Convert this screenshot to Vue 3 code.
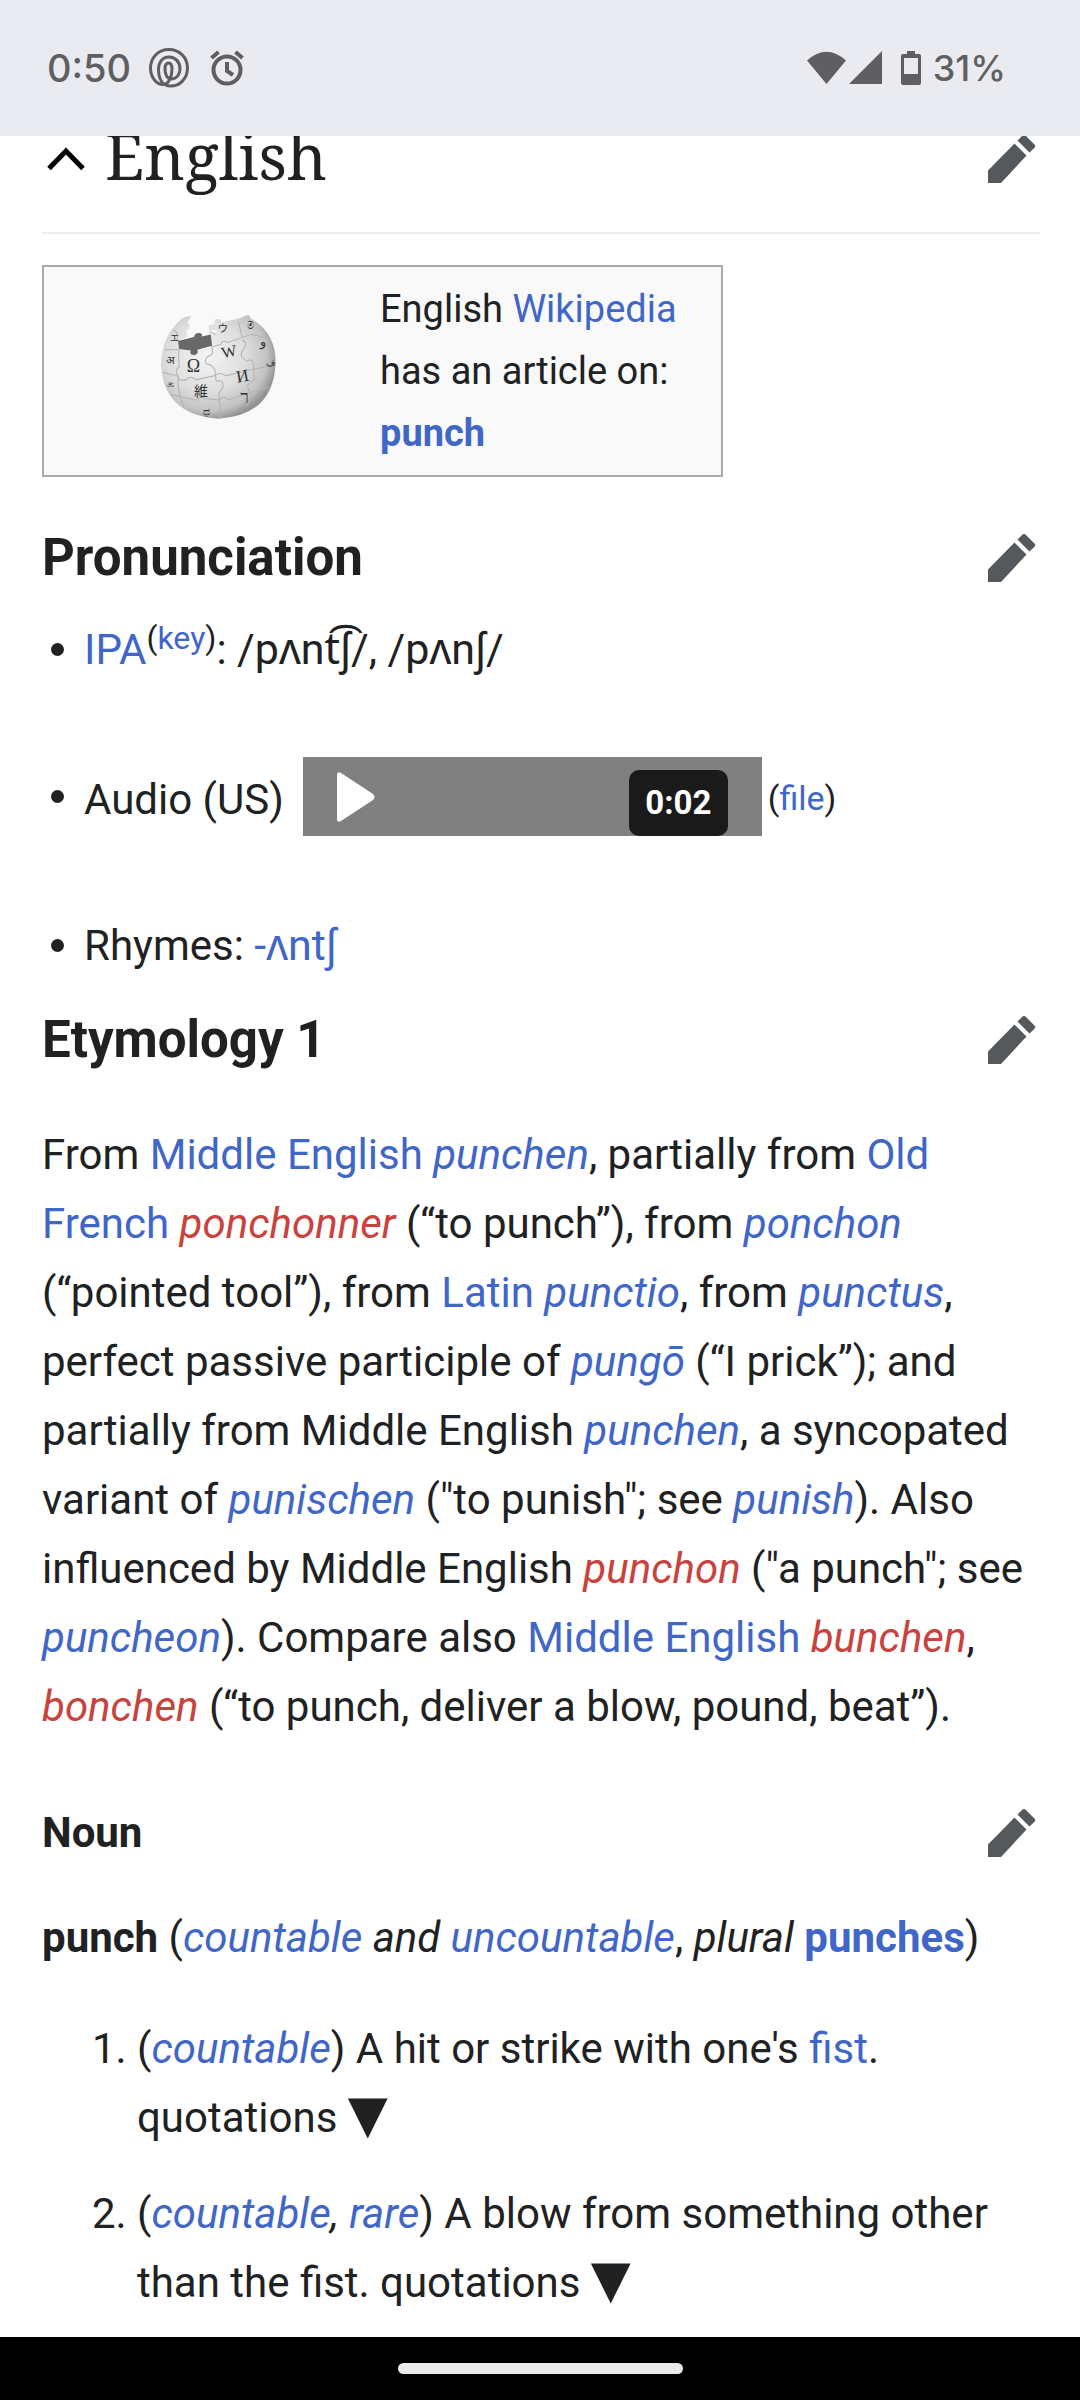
<script setup>
import { h, ref } from 'vue'

const expanded = ref(true)

const EditButton = (props) =>
  h('button', { class: 'edit', type: 'button', 'aria-label': `Edit ${props.section}` }, [
    h('svg', { viewBox: '0 0 48 48', width: 48, height: 48, 'aria-hidden': 'true' }, [
      h('path', { d: 'M0 48V35.500L26.500 8.500L38.500 20.500L13 48ZM29.500 5.500L34 1Q36 -1 38 1L46.500 9.500Q48 11 46.500 12.800L41.500 17.500Z' })
    ])
  ])
EditButton.props = ['section']
</script>

<template>
  <div class="screen">
    <header class="status">
      <div class="status-group left">
        <time>0:50</time>
        <svg class="spiral" viewBox="0 0 40 40" width="40" height="40" aria-hidden="true">
          <path d="M20 38C31 39 38.500 30 38.500 20C38.500 9 30 1.500 20 1.500C9 1.500 1.500 10 1.500 20C1.500 30 8 37 15 36.500C20 36 23 28 23 21C23 17 21.500 15 19.500 15C17 15 16 18 16 21C16 26 18 31 22 31C28 31 31 26 31 21C31 14 26.500 9 20 9C13 9 9.500 15 9.500 21C9.500 30 13 37 20 38" />
        </svg>
        <svg class="alarm" viewBox="0 0 34 36" width="34" height="36" aria-hidden="true">
          <circle cx="17" cy="20" r="13.500" />
          <path d="M17 12V21L23 25M1.500 8L8.500 2M32.500 8L25.500 2" />
        </svg>
      </div>
      <div class="status-group">
        <svg class="solid" viewBox="0 0 76 34" width="76" height="34" aria-hidden="true">
          <path d="M0 9.500Q19.500 -8 39 9.500L19.500 33ZM42 33L75 0V33Z" />
        </svg>
        <svg class="solid battery" viewBox="0 0 20 34" width="20" height="34" aria-hidden="true">
          <path fill-rule="evenodd" d="M6 0H14V3H18Q20 3 20 5V32Q20 34 18 34H2Q0 34 0 32V5Q0 3 2 3H6ZM3 7V23H17V7Z" />
        </svg>
        <span class="percent">31%</span>
      </div>
    </header>

    <main>
      <div class="title-row">
        <button class="collapse" type="button" aria-label="Toggle section" :aria-expanded="expanded" @click="expanded = !expanded">
          <svg viewBox="0 0 38 24" width="38" height="24" aria-hidden="true"><path d="M2 21.500L19 4L36 21.500" /></svg>
        </button>
        <h2>English</h2>
        <EditButton section="English" />
      </div>

      <template v-if="expanded">
        <aside class="sister">
          <div class="globe">
            <svg viewBox="55 40 350 347" width="117" height="116" role="img" aria-label="Wikipedia globe">
              <defs>
                <radialGradient id="ball" cx="0.400" cy="0.400" r="0.620">
                  <stop offset="0" stop-color="#f4f4f4" />
                  <stop offset="0.550" stop-color="#dedede" />
                  <stop offset="0.850" stop-color="#c2c2c2" />
                  <stop offset="1" stop-color="#929292" />
                </radialGradient>
              </defs>
              <path fill="url(#ball)" d="M118 62Q132 48 152 50L140 68Q150 76 146 86L136 94L140 110L112 124L115 148L148 152Q142 164 158 166Q174 166 170 152L212 142V104L228 96L224 90L206 96L202 78L222 72Q220 58 232 58Q244 58 241 68L290 58L314 48Q330 44 328 56Q404 96 404 190Q396 348 232 356Q68 344 61 194Q64 110 118 62Z" />
              <path fill="#686868" d="M112 124L160 112Q162 98 176 100Q188 102 182 110L210 104L214 138L170 150Q174 164 160 166Q144 164 150 152L115 148Z" />
              <g fill="none" stroke="#b2b2b2" stroke-width="3">
                <path d="M98 90Q116 100 108 124M72 150H115M66 218L110 228Q114 246 136 240Q150 224 166 240L220 228Q242 214 254 228L330 210L396 196" />
                <path d="M115 150Q112 180 116 200Q100 210 112 228Q110 280 130 320M212 142Q222 162 206 168Q188 176 196 192Q214 196 222 208L226 244Q250 238 246 262L234 282L240 354" />
                <path d="M212 142L240 134Q244 118 260 128L330 104L386 116M304 120Q324 128 304 154Q294 172 318 184Q336 172 338 200L340 240Q310 252 326 274Q336 290 318 320" />
                <path d="M88 282Q160 300 172 300Q176 284 190 296L234 300Q248 284 264 300L330 276L384 262M292 64L304 112M206 96L224 104" />
              </g>
              <g class="glyphs">
                <text x="138" y="216" font-size="54">Ω</text>
                <text x="242" y="172" font-size="48" transform="rotate(-12 265 155)">W</text>
                <text x="286" y="246" font-size="52" transform="rotate(-10 305 230)">И</text>
                <text x="160" y="288" font-size="42">維</text>
                <text x="298" y="308" font-size="52">ר</text>
                <text x="230" y="96" font-size="32">ウ</text>
                <text x="318" y="88" font-size="30">ම</text>
                <text x="356" y="138" font-size="38">و</text>
                <text x="88" y="124" font-size="28">エ</text>
                <text x="76" y="194" font-size="34">अ</text>
                <text x="80" y="262" font-size="34">க</text>
                <text x="186" y="344" font-size="34">ಧ</text>
                <text x="376" y="200" font-size="28">ف</text>
              </g>
            </svg>
          </div>
          <p>English <a href="#wikipedia">Wikipedia</a><br>has an article on:<br><a class="strong" href="#punch">punch</a></p>
        </aside>

        <div class="heading-row">
          <h3>Pronunciation</h3>
          <EditButton section="Pronunciation" />
        </div>
        <ul class="sounds">
          <li><p><a href="#ipa">IPA</a><sup>(<a href="#key">key</a>)</sup>: <span class="ipa">/pʌnt͡ʃ/</span>, <span class="ipa">/pʌnʃ/</span></p></li>
          <li>
            <span class="audio-label">Audio (US)</span>
            <button class="player" type="button" aria-label="Play audio, 2 seconds">
              <svg viewBox="0 0 38 50" width="38" height="50" aria-hidden="true"><path d="M0 3Q0 -1 4 1L36 22Q39 25 36 28L4 49Q0 51 0 47Z" /></svg>
              <span class="duration">0:02</span>
            </button>
            <span class="file">(<a href="#file">file</a>)</span>
          </li>
          <li><p>Rhymes: <a class="ipa" href="#rhymes">-ʌntʃ</a></p></li>
        </ul>

        <div class="heading-row etymology">
          <h3>Etymology 1</h3>
          <EditButton section="Etymology 1" />
        </div>
        <p class="origin">From <a href="#me">Middle English</a> <i><a href="#punchen">punchen</a></i>, partially from <a href="#of">Old French</a> <i><a class="missing" href="#ponchonner">ponchonner</a></i> (“to punch”), from <i><a href="#ponchon">ponchon</a></i> (“pointed tool”), from <a href="#latin">Latin</a> <i><a href="#punctio">punctio</a></i>, from <i><a href="#punctus">punctus</a></i>, perfect passive participle of <i><a href="#pungo">pungō</a></i> (“I prick”); and partially from Middle English <i><a href="#punchen">punchen</a></i>, a syncopated variant of <i><a href="#punischen">punischen</a></i> ("to punish"; see <i><a href="#punish">punish</a></i>). Also influenced by Middle English <i><a class="missing" href="#punchon">punchon</a></i> ("a punch"; see <i><a href="#puncheon">puncheon</a></i>). Compare also <a href="#me">Middle English</a> <i><a class="missing" href="#bunchen">bunchen</a></i>, <i><a class="missing" href="#bonchen">bonchen</a></i> (“to punch, deliver a blow, pound, beat”).</p>

        <div class="heading-row noun">
          <h4>Noun</h4>
          <EditButton section="Noun" />
        </div>
        <p class="headword"><b>punch</b> (<i><a href="#countable">countable</a> and <a href="#uncountable">uncountable</a></i>, <i>plural</i> <a class="strong" href="#punches">punches</a>)</p>
        <ol>
          <li>(<i><a href="#countable">countable</a></i>) A hit or strike with one's <a href="#fist">fist</a>. <button class="quotes" type="button">quotations <span class="arrow">▼</span></button></li>
          <li>(<i><a href="#countable">countable</a>, <a href="#rare">rare</a></i>) A blow from something other than the fist. <button class="quotes" type="button">quotations <span class="arrow">▼</span></button></li>
        </ol>
      </template>
    </main>

    <footer class="navbar"><span class="handle"></span></footer>
  </div>
</template>

<style>
body { background: #fff; }
</style>

<style scoped>
.screen {
  display: flex;
  flex-direction: column;
  min-height: 100vh;
  overflow: hidden;
  color: #202122;
  font: 42px/69px Roboto, "Noto Sans", "DejaVu Sans", sans-serif;
}
h2, h3, h4, p, ul, ol { margin: 0; padding: 0; }
a { color: #4066c8; text-decoration: none; }
a.missing { color: #ca423d; }
.strong { font-weight: 700; }
button { padding: 0; border: 0; background: none; color: inherit; font: inherit; cursor: pointer; }
svg { display: block; flex: none; }

.status {
  position: relative;
  z-index: 1;
  display: flex;
  align-items: center;
  justify-content: space-between;
  height: 136px;
  padding: 0 74px 0 47px;
  background: #eaebf0;
  color: #5f5f61;
  font: 500 38px/48px Inter, sans-serif;
}
.status-group { display: flex; align-items: center; gap: 12px; }
.status-group.left { gap: 18px; }
.percent { font-size: 36px; }
.solid { fill: currentColor; }
.battery { margin-left: 6px; }
.spiral, .alarm { fill: none; stroke: currentColor; stroke-width: 3px; }
.alarm { margin-left: 3px; stroke-width: 4px; }

main { padding: 0 40px 0 42px; }
.title-row {
  display: flex;
  align-items: center;
  height: 94px;
  margin-top: -24px;
  padding-bottom: 26px;
  border-bottom: 2px solid #eaebf0;
}
.collapse { padding: 0 20px 0 5px; }
.collapse svg { fill: none; stroke: #000; stroke-width: 5px; }
h2 { padding-bottom: 6px; font: 400 63px/88px "Noto Serif", "Liberation Serif", serif; }
:deep(.edit), .edit { margin-left: auto; padding: 0 4px; border: 0; background: none; }
:deep(.edit svg), .edit svg { display: block; overflow: visible; fill: #54595d; }

.sister {
  display: flex;
  align-items: center;
  box-sizing: border-box;
  width: 681px;
  max-width: 100%;
  margin-top: 31px;
  padding: 11px 0 11px 10px;
  border: 2px solid #a9aaab;
  background: #f9f9f9;
  font-size: 38px;
  line-height: 62px;
}
.globe { display: flex; flex: none; justify-content: center; width: 326px; }
.glyphs { fill: #333; font-family: "Liberation Serif", "Noto Sans CJK JP", serif; }

.heading-row { display: flex; align-items: center; height: 60px; margin-top: 51px; }
h3 { font: 700 51px/60px Roboto, sans-serif; }
h4 { font: 700 42px/60px Roboto, sans-serif; }

.sounds { display: grid; gap: 73px; margin: 27px 0 0 9px; list-style: none; }
.sounds li { display: flex; align-items: center; }
.sounds li:last-child { padding-top: 2px; }
.sounds li::before {
  content: "";
  flex: none;
  width: 13px;
  height: 13px;
  margin-right: 20px;
  border-radius: 50%;
  background: #202122;
}
.ipa { font-size: 43px; }
sup { font-size: 32px; line-height: 0; vertical-align: 15px; }
.audio-label { padding-top: 6px; }
.player {
  display: flex;
  align-items: flex-end;
  justify-content: space-between;
  box-sizing: border-box;
  width: 459px;
  height: 79px;
  margin: 0 6px 0 19px;
  padding: 0 34px;
  background: #808080;
}
.player svg { align-self: center; fill: #fff; }
.duration {
  width: 99px;
  border-radius: 10px;
  background: #1a1a1a;
  color: #fff;
  font: 700 33px/66px Roboto, sans-serif;
}
.file { padding-top: 4px; font-size: 34px; }

.etymology { margin-top: 30px; }
.origin { margin-top: 50px; }
.noun { margin-top: 62px; }
.headword { margin-top: 40px; }
ol { display: grid; gap: 27px; margin-top: 42px; padding-left: 95px; }
.quotes { display: inline; }
.arrow { font-family: "DejaVu Sans", sans-serif; font-size: 52px; line-height: 0; }

.navbar {
  display: flex;
  align-items: center;
  justify-content: center;
  height: 63px;
  margin-top: auto;
  background: #000;
}
.handle { width: 285px; height: 11px; border-radius: 6px; background: #ebebeb; }
</style>
